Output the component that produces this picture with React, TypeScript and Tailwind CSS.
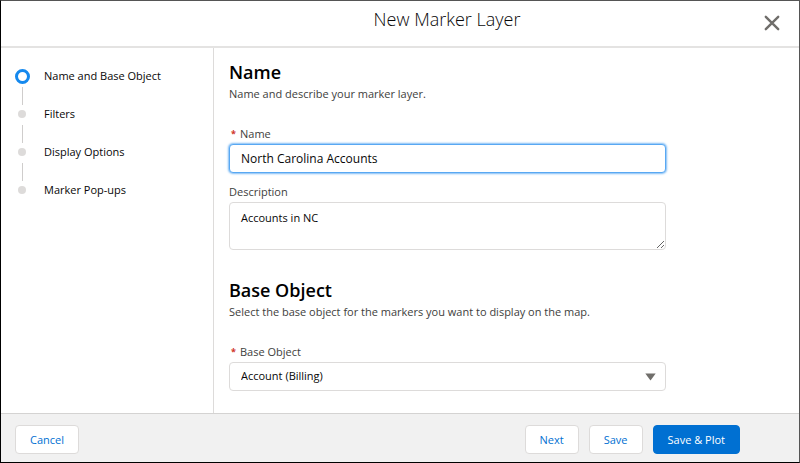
import React from "react";

const steps = ["Name and Base Object", "Filters", "Display Options", "Marker Pop-ups"];

const field = "block w-full rounded border px-[11px] text-[#080707] outline-none";
const plain = "border-[#dddbda] bg-white text-[11px]";

function Step({ label, index }: { label: string; index: number }) {
  const active = index === 0;
  const last = index === steps.length - 1;
  return (
    <li className={`flex gap-[14px] ${last ? "" : "h-[38px]"}`} aria-current={active ? "step" : undefined}>
      <div className="flex w-4 shrink-0 flex-col items-center">
        <span className="flex h-4 w-4 items-center justify-center">
          {active ? (
            <span className="h-[15px] w-[15px] rounded-full border-[3px] border-[#1589ee] bg-white" />
          ) : (
            <span className="h-2 w-2 rounded-full bg-[#dddbda]" />
          )}
        </span>
        {!last && <span className="mb-px mt-[3px] w-px grow bg-[#cfcdcc]" />}
      </div>
      <span className="text-[11px] leading-4 text-[#080707]">{label}</span>
    </li>
  );
}

function Heading({ title, children }: { title: string; children: string }) {
  return (
    <>
      <h2 className="text-[18px] font-semibold leading-6 text-black">{title}</h2>
      <p className="mt-[2px] text-[11px] leading-4 text-[#3e3e3c]">{children}</p>
    </>
  );
}

function Label({ id, required, children }: { id: string; required?: boolean; children: string }) {
  return (
    <label htmlFor={id} className="mb-[2px] flex text-[11px] leading-4 text-[#3e3e3c]">
      {required && (
        <abbr title="required" className="w-[11px] pl-[2px] text-[9px] font-bold text-[#d0342c] no-underline">
          *
        </abbr>
      )}
      {children}
    </label>
  );
}

function Button({ primary, children }: { primary?: boolean; children: string }) {
  return (
    <button
      type="button"
      className={`h-[29px] rounded border px-[14px] text-[11px] font-medium leading-4 ${
        primary ? "border-[#0070d2] bg-[#0070d2] text-white" : "border-[#dddbda] bg-white text-[#0070d2]"
      }`}
    >
      {children}
    </button>
  );
}

export default function App() {
  return (
    <div className="flex min-h-screen flex-col border border-black border-t-[#555] border-r-[#555] bg-white font-['Open_Sans',sans-serif]">
      <header className="flex h-[47px] shrink-0 items-start border-b-2 border-[#e4e3e2] pl-[129px] pr-[19px]">
        <h1 className="grow pt-[6px] text-center text-[18px] font-light leading-6 text-[#080707]">New Marker Layer</h1>
        <button type="button" aria-label="Close" className="mt-[14px] text-[#706e6b]">
          <svg width="16" height="16" viewBox="0 0 16 16" fill="none" stroke="currentColor" strokeWidth="2.4" strokeLinecap="round">
            <path d="M1.8 1.8L14.2 14.2M14.2 1.8L1.8 14.2" />
          </svg>
        </button>
      </header>

      <div className="flex grow">
        <nav className="w-[213px] shrink-0 border-r border-[#dddbda] pl-[13px] pt-5">
          <ol>
            {steps.map((label, i) => (
              <Step key={label} label={label} index={i} />
            ))}
          </ol>
        </nav>

        <main className="grow px-[15px] pb-[22px] pt-3">
          <form className="max-w-[437px]">
            <Heading title="Name">Name and describe your marker layer.</Heading>
            <div className="mt-6">
              <Label id="name" required>Name</Label>
              <input
                id="name"
                defaultValue="North Carolina Accounts"
                className={`${field} h-[29px] border-[#58a8f3] bg-white text-[12px] shadow-[0_0_2px_1px_#7fbcf5]`}
              />
            </div>
            <div className="mt-[11px]">
              <Label id="description">Description</Label>
              <textarea id="description" defaultValue="Accounts in NC" className={`${field} ${plain} h-12 resize-y py-[7px] leading-4`} />
            </div>
            <div className="mt-7">
              <Heading title="Base Object">Select the base object for the markers you want to display on the map.</Heading>
            </div>
            <div className="mt-6">
              <Label id="base" required>Base Object</Label>
              <div className="relative">
                <select id="base" className={`${field} ${plain} h-[29px] appearance-none`}>
                  <option>Account (Billing)</option>
                </select>
                <svg className="pointer-events-none absolute right-[10px] top-[11px] text-[#706e6b]" width="11" height="8" viewBox="0 0 11 8" fill="currentColor">
                  <path d="M0.3 0.5H10.7L5.5 7.5Z" />
                </svg>
              </div>
            </div>
          </form>
        </main>
      </div>

      <footer className="flex shrink-0 items-center justify-between border-t border-[#d4d3d2] bg-[#f1f1f1] pb-2 pl-[14px] pr-[59px] pt-[11px]">
        <Button>Cancel</Button>
        <div className="flex gap-[10px]">
          <Button>Next</Button>
          <Button>Save</Button>
          <Button primary>{"Save & Plot"}</Button>
        </div>
      </footer>
    </div>
  );
}
